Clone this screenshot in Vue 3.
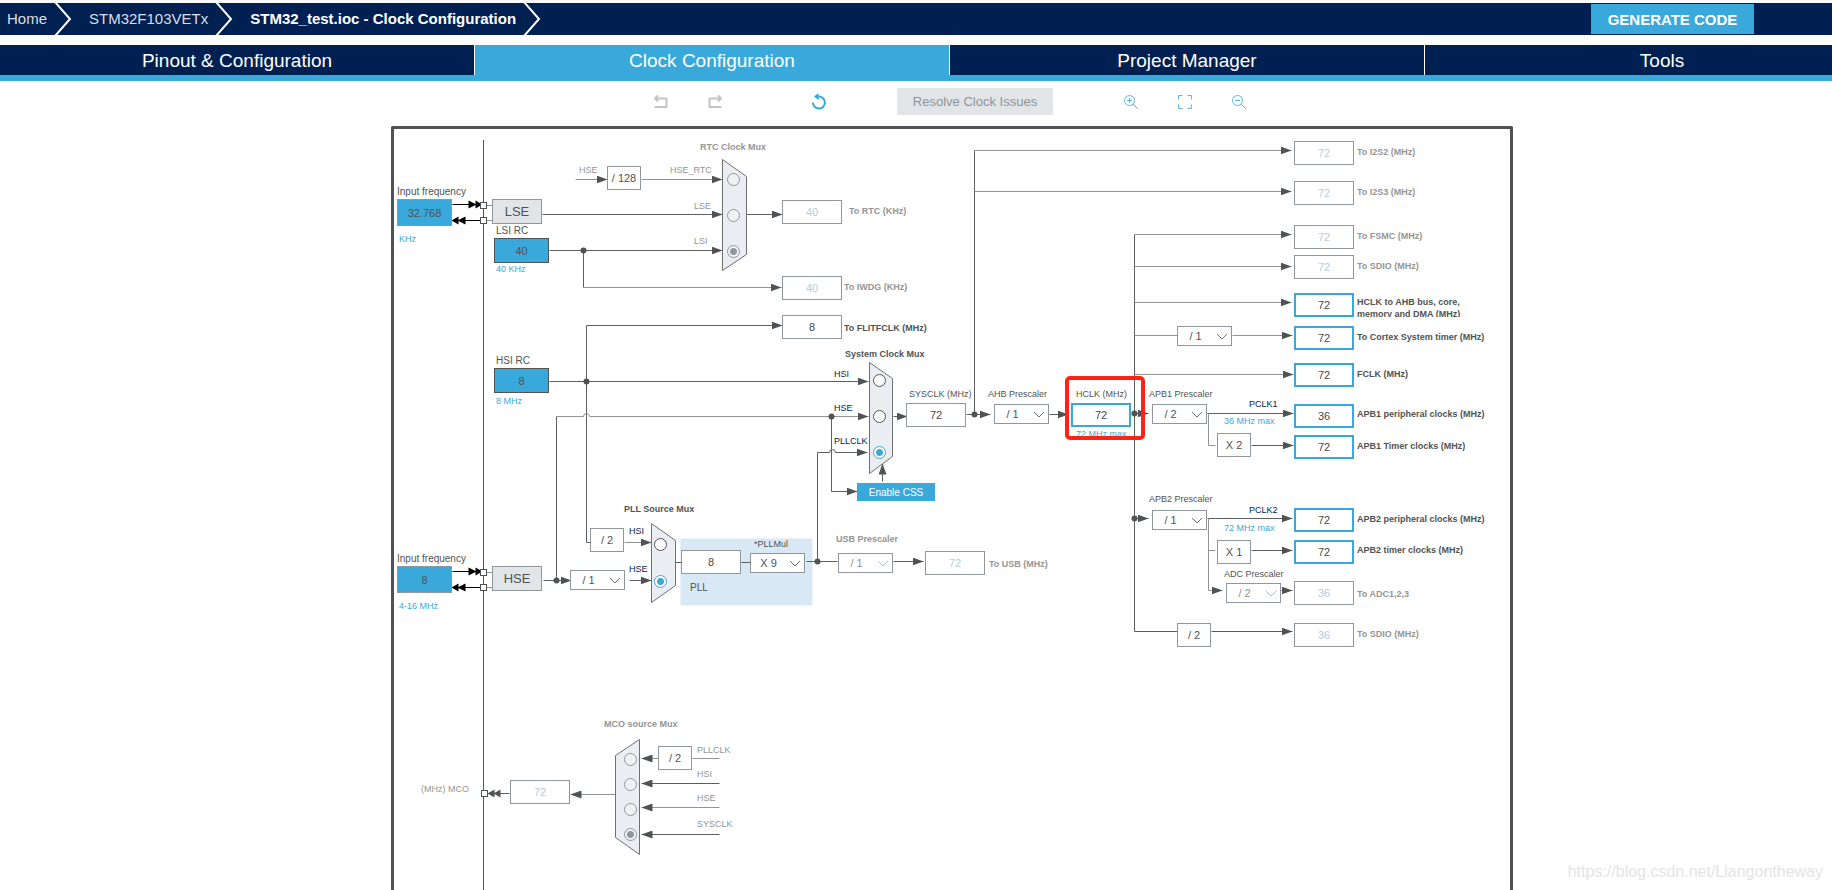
<script setup>
import { reactive } from 'vue'

// Canvas coordinates of the inner top-left corner of the board.
const origin = { x: 394, y: 129 }

const place = (n) => ({
  left: `${n.x - origin.x}px`,
  top: `${n.y - origin.y}px`,
  ...(n.w ? { width: `${n.w}px` } : {}),
  ...(n.h ? { height: `${n.h}px` } : {}),
})
const placeText = (t) => place({ ...t, y: t.y - 6 })

const crumbs = [
  { text: 'Home', kind: 'first' },
  { text: 'STM32F103VETx', kind: '' },
  { text: 'STM32_test.ioc - Clock Configuration', kind: 'current' },
]

const tabs = ['Pinout & Configuration', 'Clock Configuration', 'Project Manager', 'Tools']

const fields = reactive([
  { id: 'lse-in', name: 'LSE input frequency', value: '32.768', x: 397, y: 199, w: 55, h: 27, kind: 'source' },
  { id: 'hse-in', name: 'HSE input frequency', value: '8', x: 397, y: 566, w: 55, h: 27, kind: 'source' },
  { id: 'lsi-rc', name: 'LSI RC', value: '40', x: 494, y: 238, w: 55, h: 25, kind: 'source rc', fixed: true },
  { id: 'hsi-rc', name: 'HSI RC', value: '8', x: 494, y: 368, w: 55, h: 25, kind: 'source rc', fixed: true },
  { id: 'rtc', name: 'To RTC', value: '40', x: 782, y: 200, kind: 'off' },
  { id: 'iwdg', name: 'To IWDG', value: '40', x: 782, y: 276, kind: 'off' },
  { id: 'flitf', name: 'To FLITFCLK', value: '8', x: 782, y: 315, kind: '' },
  { id: 'sysclk', name: 'SYSCLK', value: '72', x: 906, y: 403, kind: '' },
  { id: 'hclk', name: 'HCLK', value: '72', x: 1071, y: 403, kind: 'live' },
  { id: 'pll-in', name: 'PLL input', value: '8', x: 681, y: 550, kind: '' },
  { id: 'usb', name: 'To USB', value: '72', x: 925, y: 551, kind: 'off' },
  { id: 'mco', name: 'MCO', value: '72', x: 510, y: 780, kind: 'off' },
  { id: 'i2s2', name: 'To I2S2', value: '72', x: 1294, y: 141, kind: 'off' },
  { id: 'i2s3', name: 'To I2S3', value: '72', x: 1294, y: 181, kind: 'off' },
  { id: 'fsmc', name: 'To FSMC', value: '72', x: 1294, y: 225, kind: 'off' },
  { id: 'sdio', name: 'To SDIO', value: '72', x: 1294, y: 255, kind: 'off' },
  { id: 'ahb-bus', name: 'HCLK to AHB bus', value: '72', x: 1294, y: 293, kind: 'live' },
  { id: 'cortex', name: 'To Cortex System timer', value: '72', x: 1294, y: 326, kind: 'live' },
  { id: 'fclk', name: 'FCLK', value: '72', x: 1294, y: 363, kind: 'live' },
  { id: 'apb1-per', name: 'APB1 peripheral clocks', value: '36', x: 1294, y: 404, kind: 'live' },
  { id: 'apb1-tim', name: 'APB1 Timer clocks', value: '72', x: 1294, y: 435, kind: 'live' },
  { id: 'apb2-per', name: 'APB2 peripheral clocks', value: '72', x: 1294, y: 508, kind: 'live' },
  { id: 'apb2-tim', name: 'APB2 timer clocks', value: '72', x: 1294, y: 540, kind: 'live' },
  { id: 'adc', name: 'To ADC1,2,3', value: '36', x: 1294, y: 581, kind: 'off' },
  { id: 'sdio2', name: 'To SDIO', value: '36', x: 1294, y: 623, kind: 'off' },
])

const selects = [
  { id: 'hse-div', name: 'HSE divider', value: '/ 1', x: 570, y: 570 },
  { id: 'pll-mul', name: 'PLLMul', value: 'X 9', x: 750, y: 553 },
  { id: 'usb-div', name: 'USB Prescaler', value: '/ 1', x: 838, y: 553, off: true },
  { id: 'ahb-div', name: 'AHB Prescaler', value: '/ 1', x: 994, y: 404 },
  { id: 'cortex-div', name: 'Cortex divider', value: '/ 1', x: 1177, y: 326 },
  { id: 'apb1-div', name: 'APB1 Prescaler', value: '/ 2', x: 1152, y: 404 },
  { id: 'apb2-div', name: 'APB2 Prescaler', value: '/ 1', x: 1152, y: 510 },
  { id: 'adc-div', name: 'ADC Prescaler', value: '/ 2', x: 1226, y: 583, off: true },
]

const factors = [
  { text: '/ 128', x: 607, y: 166 },
  { text: '/ 2', x: 590, y: 528 },
  { text: 'X 2', x: 1217, y: 433 },
  { text: 'X 1', x: 1217, y: 540 },
  { text: '/ 2', x: 1177, y: 623 },
  { text: '/ 2', x: 658, y: 746 },
]

const oscillators = [
  { text: 'LSE', x: 492, y: 199 },
  { text: 'HSE', x: 492, y: 566 },
]

const muxes = [
  {
    name: 'rtc-mux', off: true, x: 734, picked: 'LSI', points: '722,159 746,176 746,254 722,270',
    inputs: [{ text: 'HSE_RTC', y: 179 }, { text: 'LSE', y: 215 }, { text: 'LSI', y: 251 }],
  },
  {
    name: 'system-mux', x: 880, picked: 'PLLCLK', points: '869,362 892,378 892,456 869,473',
    inputs: [{ text: 'HSI', y: 380 }, { text: 'HSE', y: 416 }, { text: 'PLLCLK', y: 452 }],
  },
  {
    name: 'pll-mux', x: 661, picked: 'HSE', points: '651,523 675,540 675,585 651,602',
    inputs: [{ text: 'HSI', y: 544 }, { text: 'HSE', y: 581 }],
  },
  {
    name: 'mco-mux', off: true, x: 631, picked: 'SYSCLK', points: '639,739 615,755 615,837 639,854',
    inputs: [{ text: 'PLLCLK', y: 759 }, { text: 'HSI', y: 784 }, { text: 'HSE', y: 809 }, { text: 'SYSCLK', y: 834 }],
  },
]

const labels = [
  { text: 'Input frequency', x: 397, y: 192, for: 'lse-in', kind: 'wide' },
  { text: 'KHz', x: 399, y: 239, kind: 'blue' },
  { text: 'LSI RC', x: 496, y: 231, for: 'lsi-rc', kind: 'wide' },
  { text: '40 KHz', x: 496, y: 269, kind: 'blue' },
  { text: 'HSI RC', x: 496, y: 361, for: 'hsi-rc', kind: 'wide' },
  { text: '8 MHz', x: 496, y: 401, kind: 'blue' },
  { text: 'Input frequency', x: 397, y: 559, for: 'hse-in', kind: 'wide' },
  { text: '4-16 MHz', x: 399, y: 606, kind: 'blue' },
  { text: 'RTC Clock Mux', x: 700, y: 147, kind: 'bold dim' },
  { text: 'HSE', x: 579, y: 170, kind: 'dim' },
  { text: 'HSE_RTC', x: 670, y: 170, kind: 'dim' },
  { text: 'LSE', x: 694, y: 206, kind: 'dim' },
  { text: 'LSI', x: 694, y: 241, kind: 'dim' },
  { text: 'To RTC (KHz)', x: 849, y: 211, for: 'rtc', kind: 'bold dim' },
  { text: 'To IWDG (KHz)', x: 844, y: 287, for: 'iwdg', kind: 'bold dim' },
  { text: 'To FLITFCLK (MHz)', x: 844, y: 328, for: 'flitf', kind: 'bold' },
  { text: 'System Clock Mux', x: 845, y: 354, kind: 'bold' },
  { text: 'HSI', x: 834, y: 374, kind: 'navy' },
  { text: 'HSE', x: 834, y: 408, kind: 'navy' },
  { text: 'PLLCLK', x: 834, y: 441, kind: 'navy' },
  { text: 'SYSCLK (MHz)', x: 909, y: 394, for: 'sysclk', kind: '' },
  { text: 'AHB Prescaler', x: 988, y: 394, for: 'ahb-div', kind: '' },
  { text: 'HCLK (MHz)', x: 1076, y: 394, for: 'hclk', kind: '' },
  { text: '72 MHz max', x: 1076, y: 434, h: 8, kind: 'blue' },
  { text: 'APB1 Prescaler', x: 1149, y: 394, for: 'apb1-div', kind: '' },
  { text: 'PCLK1', x: 1249, y: 404, kind: 'navy' },
  { text: '36 MHz max', x: 1224, y: 421, kind: 'blue' },
  { text: 'APB2 Prescaler', x: 1149, y: 499, for: 'apb2-div', kind: '' },
  { text: 'PCLK2', x: 1249, y: 510, kind: 'navy' },
  { text: '72 MHz max', x: 1224, y: 528, kind: 'blue' },
  { text: 'ADC Prescaler', x: 1224, y: 574, for: 'adc-div', kind: '' },
  { text: 'PLL Source Mux', x: 624, y: 509, kind: 'bold' },
  { text: 'HSI', x: 629, y: 531, kind: 'navy' },
  { text: 'HSE', x: 629, y: 569, kind: 'navy' },
  { text: '*PLLMul', x: 754, y: 544, for: 'pll-mul', kind: '' },
  { text: 'PLL', x: 690, y: 588, kind: 'wide' },
  { text: 'USB Prescaler', x: 836, y: 539, for: 'usb-div', kind: 'bold dim' },
  { text: 'To USB (MHz)', x: 989, y: 564, for: 'usb', kind: 'bold dim' },
  { text: 'To I2S2 (MHz)', x: 1357, y: 152, for: 'i2s2', kind: 'bold dim' },
  { text: 'To I2S3 (MHz)', x: 1357, y: 192, for: 'i2s3', kind: 'bold dim' },
  { text: 'To FSMC (MHz)', x: 1357, y: 236, for: 'fsmc', kind: 'bold dim' },
  { text: 'To SDIO (MHz)', x: 1357, y: 266, for: 'sdio', kind: 'bold dim' },
  { text: 'HCLK to AHB bus, core, memory and DMA (MHz)', x: 1357, y: 302, w: 120, h: 21, for: 'ahb-bus', kind: 'bold block' },
  { text: 'To Cortex System timer (MHz)', x: 1357, y: 337, for: 'cortex', kind: 'bold' },
  { text: 'FCLK (MHz)', x: 1357, y: 374, for: 'fclk', kind: 'bold' },
  { text: 'APB1 peripheral clocks (MHz)', x: 1357, y: 414, for: 'apb1-per', kind: 'bold' },
  { text: 'APB1 Timer clocks (MHz)', x: 1357, y: 446, for: 'apb1-tim', kind: 'bold' },
  { text: 'APB2 peripheral clocks (MHz)', x: 1357, y: 519, for: 'apb2-per', kind: 'bold' },
  { text: 'APB2 timer clocks (MHz)', x: 1357, y: 550, for: 'apb2-tim', kind: 'bold' },
  { text: 'To ADC1,2,3', x: 1357, y: 594, for: 'adc', kind: 'bold dim' },
  { text: 'To SDIO (MHz)', x: 1357, y: 634, for: 'sdio2', kind: 'bold dim' },
  { text: 'MCO source Mux', x: 604, y: 724, kind: 'bold dim' },
  { text: 'PLLCLK', x: 697, y: 750, kind: 'dim' },
  { text: 'HSI', x: 697, y: 774, kind: 'dim' },
  { text: 'HSE', x: 697, y: 798, kind: 'dim' },
  { text: 'SYSCLK', x: 697, y: 824, kind: 'dim' },
  { text: '(MHz) MCO', x: 421, y: 789, for: 'mco', kind: 'dim' },
]

// Wires: path data, soft = lighter stroke, head = arrow at the end.
const wires = [
  { d: 'M575 179H607', soft: true, head: true },
  { d: 'M641 179H722', soft: true, head: true },
  { d: 'M542 214H722', head: true },
  { d: 'M549 250H722', head: true },
  { d: 'M583 250V287' },
  { d: 'M583 287H781', soft: true, head: true },
  { d: 'M746 214H782', head: true },
  { d: 'M549 381H868', head: true },
  { d: 'M590 542H586V325H782', head: true },
  { d: 'M556 580V416' },
  { d: 'M556 416H583a3 3 0 0 1 6 0H868', soft: true, head: true },
  { d: 'M831 416V491H857', head: true },
  { d: 'M817 561V452H829a3 3 0 0 1 6 0H867', head: true },
  { d: 'M882 481V463', head: true },
  { d: 'M893 416H907', head: true },
  { d: 'M966 414H990', head: true },
  { d: 'M974 414V150' },
  { d: 'M974 150H1291', soft: true, head: true },
  { d: 'M974 191H1291', soft: true, head: true },
  { d: 'M1049 414H1068', head: true },
  { d: 'M1131 413H1148', head: true },
  { d: 'M1134 234V631H1177' },
  { d: 'M1134 234H1291', soft: true, head: true },
  { d: 'M1134 266H1291', soft: true, head: true },
  { d: 'M1134 302H1291', soft: true, head: true },
  { d: 'M1134 335H1177', soft: true },
  { d: 'M1232 335H1292', soft: true, head: true },
  { d: 'M1134 374H1293', soft: true, head: true },
  { d: 'M1134 518H1148', head: true },
  { d: 'M1207 413H1293', head: true },
  { d: 'M1208 413V445H1215', soft: true },
  { d: 'M1251 445H1293', head: true },
  { d: 'M1207 518H1292', head: true },
  { d: 'M1208 550H1215', soft: true },
  { d: 'M1251 550H1292', head: true },
  { d: 'M1208 518V590H1222', soft: true, head: true },
  { d: 'M1281 590H1292', head: true },
  { d: 'M1211 631H1292', head: true },
  { d: 'M624 542H651', soft: true, head: true },
  { d: 'M543 580H571', head: true },
  { d: 'M629 580H651', head: true },
  { d: 'M675 562H681M741 562H750M806 561H837' },
  { d: 'M893 561H923', head: true },
  { d: 'M658 758H641', soft: true, head: true },
  { d: 'M692 758H719', soft: true },
  { d: 'M719 783H641', head: true },
  { d: 'M719 807H641', soft: true, head: true },
  { d: 'M719 834H641', head: true },
  { d: 'M616 794H570', soft: true, head: true },
  { d: 'M509 793H488' },
  { d: 'M486 205H492M486 220H492M486 572H492M486 587H492', soft: true },
]

const dots = [
  [583, 250], [586, 381], [831, 416], [974, 414], [1134, 413], [1134, 518], [556, 580], [817, 561],
]

const pins = [
  [483, 205], [483, 220], [483, 572], [483, 587], [484, 793],
]
</script>

<template>
  <div class="app">
    <header class="topbar">
      <nav class="crumbs" aria-label="Breadcrumb">
        <a v-for="c in crumbs" :key="c.text" href="#" class="crumb" :class="c.kind">
          <span>{{ c.text }}</span>
          <svg class="sep" viewBox="0 0 18 32" aria-hidden="true"><path d="M1 -1L16 16L1 33" /></svg>
        </a>
      </nav>
      <button type="button" class="generate">GENERATE CODE</button>
    </header>

    <nav class="tabs" aria-label="Views">
      <div class="tab-row">
        <button v-for="(t, i) in tabs" :key="t" type="button" class="tab" :class="{ active: i === 1 }">{{ t }}</button>
      </div>
    </nav>

    <div class="toolbar">
      <div class="group">
        <button type="button" class="tool" aria-label="Undo" disabled>
          <svg viewBox="0 0 16 16" class="muted"><path d="M2 4.500H13.500V13H1.500M5 1.500L2 4.500L5 7.500" /></svg>
        </button>
        <button type="button" class="tool" aria-label="Redo" disabled>
          <svg viewBox="0 0 16 16" class="muted"><path d="M14 4.500H2.500V13H14.500M11 1.500L14 4.500L11 7.500" /></svg>
        </button>
      </div>
      <div class="center">
        <button type="button" class="tool" aria-label="Refresh">
          <svg viewBox="0 0 16 16" class="strong"><path d="M6 2.600H8.200A6 6 0 1 1 1.900 8.600" /><path d="M7.600 .2L4.600 2.600L7.600 5" /></svg>
        </button>
        <button type="button" class="resolve" disabled>Resolve Clock Issues</button>
      </div>
      <div class="group">
        <button type="button" class="tool" aria-label="Zoom in">
          <svg viewBox="0 0 16 16"><circle cx="6.500" cy="6.500" r="5" /><path d="M10.200 10.200L15 15M4 6.500H9M6.500 4V9" /></svg>
        </button>
        <button type="button" class="tool" aria-label="Fit to screen">
          <svg viewBox="0 0 16 16"><path d="M1.500 5.500V1.500H5.500M10.500 1.500H14.500V5.500M14.500 10.500V14.500H10.500M5.500 14.500H1.500V10.500" /></svg>
        </button>
        <button type="button" class="tool" aria-label="Zoom out">
          <svg viewBox="0 0 16 16"><circle cx="6.500" cy="6.500" r="5" /><path d="M10.200 10.200L15 15M4 6.500H9" /></svg>
        </button>
      </div>
    </div>

    <main class="workspace">
      <div class="board">
        <div class="pin-rail"></div>
        <svg class="wires" viewBox="393.5 128.5 1116 761" aria-hidden="true">
          <defs>
            <marker id="head" viewBox="0 0 11 8" refX="11" refY="4" markerWidth="11" markerHeight="8" markerUnits="userSpaceOnUse" orient="auto">
              <path d="M0 0L11 4L0 8Z" fill="#505353" />
            </marker>
          </defs>
          <rect x="680" y="538" width="132" height="67" fill="#d9e8f5" />
          <path
            v-for="w in wires" :key="w.d" :d="w.d" class="wire" :class="{ soft: w.soft }"
            :marker-end="w.head ? 'url(#head)' : undefined"
          />
          <template v-for="y in [204, 571]" :key="y">
            <path :d="`M452 ${y}H480M452 ${y + 16}H480`" class="lead" />
            <path :d="`M468 ${y - 4}L476 ${y}L468 ${y + 4}ZM475 ${y - 4}L482 ${y}L475 ${y + 4}Z`" />
            <path :d="`M458 ${y + 12}L451 ${y + 16}L458 ${y + 20}ZM465 ${y + 12}L457 ${y + 16}L465 ${y + 20}Z`" />
          </template>
          <path d="M494 789L487 793L494 797ZM500 789L493 793L500 797Z" fill="#505353" />
          <rect v-for="p in pins" :key="p.join()" :x="p[0] - 3" :y="p[1] - 3" width="6" height="6" class="pin" />
          <circle v-for="d in dots" :key="d.join()" :cx="d[0]" :cy="d[1]" r="3" fill="#505353" />
          <polygon v-for="m in muxes" :key="m.name" :points="m.points" class="mux" />
        </svg>

        <template v-for="m in muxes" :key="m.name">
          <input
            v-for="i in m.inputs" :key="i.text" type="radio" class="radio" :class="{ off: m.off }" :name="m.name"
            :aria-label="`${m.name} ${i.text}`" :checked="i.text === m.picked" :disabled="m.off"
            :style="place({ x: m.x - 7, y: i.y - 6 })"
          />
        </template>

        <component
          :is="l.for ? 'label' : 'span'" v-for="(l, i) in labels" :key="i" :for="l.for" class="label" :class="l.kind"
          :style="placeText(l)"
        >{{ l.text }}</component>

        <input
          v-for="f in fields" :id="f.id" :key="f.id" v-model="f.value" type="text" class="field" :class="f.kind"
          :aria-label="f.name" :readonly="f.kind === 'off' || f.fixed" :style="place(f)"
        />

        <div v-for="s in selects" :key="s.id" class="pick" :class="{ off: s.off }" :style="place(s)">
          <select :id="s.id" :aria-label="s.name" :disabled="s.off"><option>{{ s.value }}</option></select>
          <svg viewBox="0 0 12 7" aria-hidden="true"><path d="M1 1L6 6L11 1" /></svg>
        </div>

        <span v-for="(f, i) in factors" :key="i" class="factor" :style="place(f)">{{ f.text }}</span>
        <button v-for="o in oscillators" :key="o.text" type="button" class="osc" :style="place(o)">{{ o.text }}</button>
        <button type="button" class="css-button" :style="place({ x: 857, y: 483 })">Enable CSS</button>
        <div class="highlight" :style="place({ x: 1065, y: 376, w: 80, h: 64 })"></div>
      </div>
    </main>
    <div class="watermark">https://blog.csdn.net/Liangontheway</div>
  </div>
</template>

<style>
body {
  margin: 0;
  background: #fff;
}
</style>

<style scoped>
.app {
  position: relative;
  display: flex;
  flex-direction: column;
  height: 100vh;
  overflow: hidden;
  font-family: "Liberation Sans", Arial, sans-serif;
  color: #505353;
}

button,
input,
select {
  box-sizing: border-box;
  margin: 0;
  padding: 0;
  border: 0;
  border-radius: 0;
  font-family: inherit;
}

.topbar {
  display: flex;
  flex: none;
  align-items: center;
  justify-content: space-between;
  height: 32px;
  padding-right: 78px;
  border-top: 3px solid #fafafa;
  background: #002052;
}

.crumbs {
  display: flex;
}

.crumb {
  display: flex;
  align-items: center;
  height: 32px;
  padding-left: 17px;
  color: #d9dfe8;
  font-size: 15px;
  line-height: 32px;
  text-decoration: none;
  white-space: nowrap;
}

.crumb.first {
  padding-left: 7px;
}

.crumb.current {
  color: #fff;
  font-weight: bold;
}

.sep {
  width: 18px;
  height: 32px;
  margin-left: 7px;
  fill: none;
  stroke: #fff;
  stroke-width: 2;
}

.generate {
  width: 163px;
  height: 30px;
  background: #39a9dc;
  color: #fff;
  font-size: 15px;
  font-weight: bold;
}

.tabs {
  flex: none;
  margin-top: 10px;
  overflow: hidden;
  border-bottom: 6px solid #39a9dc;
}

.tab-row {
  display: flex;
  width: calc(100% + 68px);
}

.tab {
  flex: 1 1 0;
  height: 30px;
  padding-top: 1px;
  border-right: 1px solid #fff;
  background: #002052;
  color: #fff;
  font-size: 19px;
  line-height: 29px;
}

.tab.active {
  background: #39a9dc;
}

.toolbar {
  display: flex;
  flex: none;
  justify-content: center;
  align-items: center;
  gap: 66px;
  height: 41px;
  padding-bottom: 4px;
  padding-left: 68px;
}

.group {
  display: flex;
  gap: 30px;
}

.center {
  display: flex;
  align-items: center;
  gap: 66px;
  padding-left: 14px;
}

.tool {
  display: flex;
  align-items: center;
  justify-content: center;
  width: 24px;
  height: 24px;
  background: none;
}

.tool svg {
  width: 16px;
  height: 16px;
  fill: none;
  stroke: #5db8e2;
  stroke-width: 1;
}

.tool svg.muted {
  stroke: #c4c4c4;
  stroke-width: 2;
}

.tool svg.strong {
  stroke: #39a9dc;
  stroke-width: 2;
}

.resolve {
  width: 156px;
  height: 27px;
  background: #e1e5e8;
  color: #8e9499;
  font-size: 13px;
}

.workspace {
  display: grid;
  flex: 1 1 0;
  grid-template-columns: 391fr 1122px 319fr;
  min-height: 0;
}

.board {
  position: relative;
  grid-column: 2;
  overflow: hidden;
  border: 3px solid #505353;
  border-bottom: 0;
  border-radius: 2px 2px 0 0;
}

.pin-rail {
  position: absolute;
  top: 11px;
  bottom: 0;
  left: 89px;
  width: 1px;
  background: #505353;
}

.wires {
  position: absolute;
  top: 0;
  left: 0;
  width: 1116px;
  height: 761px;
}

.wire {
  fill: none;
  stroke: #5c5f5f;
  stroke-width: 1;
}

.wire.soft {
  stroke: #929494;
}

.lead {
  stroke: #000;
}

.pin {
  fill: #fff;
  stroke: #505353;
}

.mux {
  fill: #eaeef2;
  stroke: #6d7174;
}

.radio {
  position: absolute;
  width: 13px;
  height: 13px;
  appearance: none;
  border: 1px solid #505353;
  border-radius: 50%;
  background: #fff;
}

.radio:checked {
  border-color: #39a9dc;
  background: radial-gradient(circle, #39a9dc 3px, #fff 4px);
}

.radio.off {
  border-color: #8f979d;
  background: #f0f2f4;
}

.radio.off:checked {
  background: radial-gradient(circle, #8f979d 3px, #f0f2f4 4px);
}

.label {
  position: absolute;
  overflow: hidden;
  font-size: 9px;
  line-height: 12px;
  white-space: nowrap;
}

.label.block {
  white-space: normal;
}

.label.wide {
  font-size: 10px;
}

.label.bold {
  font-weight: bold;
}

.label.dim {
  color: #959595;
}

.label.blue {
  color: #39a9dc;
}

.label.navy {
  color: #03234b;
}

.field {
  position: absolute;
  width: 60px;
  height: 24px;
  border: 1px solid #8f979d;
  background: #fff;
  color: #46494b;
  font-size: 11px;
  text-align: center;
}

.field.live {
  border: 2px solid #39a9dc;
}

.field.off {
  color: #b4cae2;
}

.field.source {
  background: #39a9dc;
  color: #505353;
}

.field.rc {
  border-color: #505353;
}

.pick {
  position: absolute;
  width: 55px;
  height: 20px;
}

.pick select {
  width: 55px;
  height: 20px;
  padding-right: 18px;
  appearance: none;
  border: 1px solid #8f979d;
  background: #fff;
  color: #505353;
  font-size: 11px;
  text-align: center;
  text-align-last: center;
  opacity: 1;
}

.pick svg {
  position: absolute;
  top: 7px;
  right: 4px;
  width: 12px;
  height: 7px;
  fill: none;
  stroke: #6d7174;
  pointer-events: none;
}

.pick.off select {
  color: #8f9090;
}

.pick.off svg {
  stroke: #b9bcbe;
}

.factor {
  position: absolute;
  box-sizing: border-box;
  width: 34px;
  height: 24px;
  border: 1px solid #8f979d;
  background: #fff;
  font-size: 11px;
  line-height: 22px;
  text-align: center;
}

.osc {
  position: absolute;
  width: 50px;
  height: 25px;
  border: 1px solid #8f979d;
  background: #e1e5e8;
  color: #505353;
  font-size: 13px;
}

.css-button {
  position: absolute;
  width: 78px;
  height: 18px;
  background: #39a9dc;
  color: #fff;
  font-size: 10px;
}

.highlight {
  position: absolute;
  box-sizing: border-box;
  border: 4px solid #fe2312;
  border-radius: 5px;
  pointer-events: none;
}

.watermark {
  position: absolute;
  right: 9px;
  bottom: 8px;
  color: #e4e4e4;
  font-size: 16px;
  line-height: 20px;
}
</style>
